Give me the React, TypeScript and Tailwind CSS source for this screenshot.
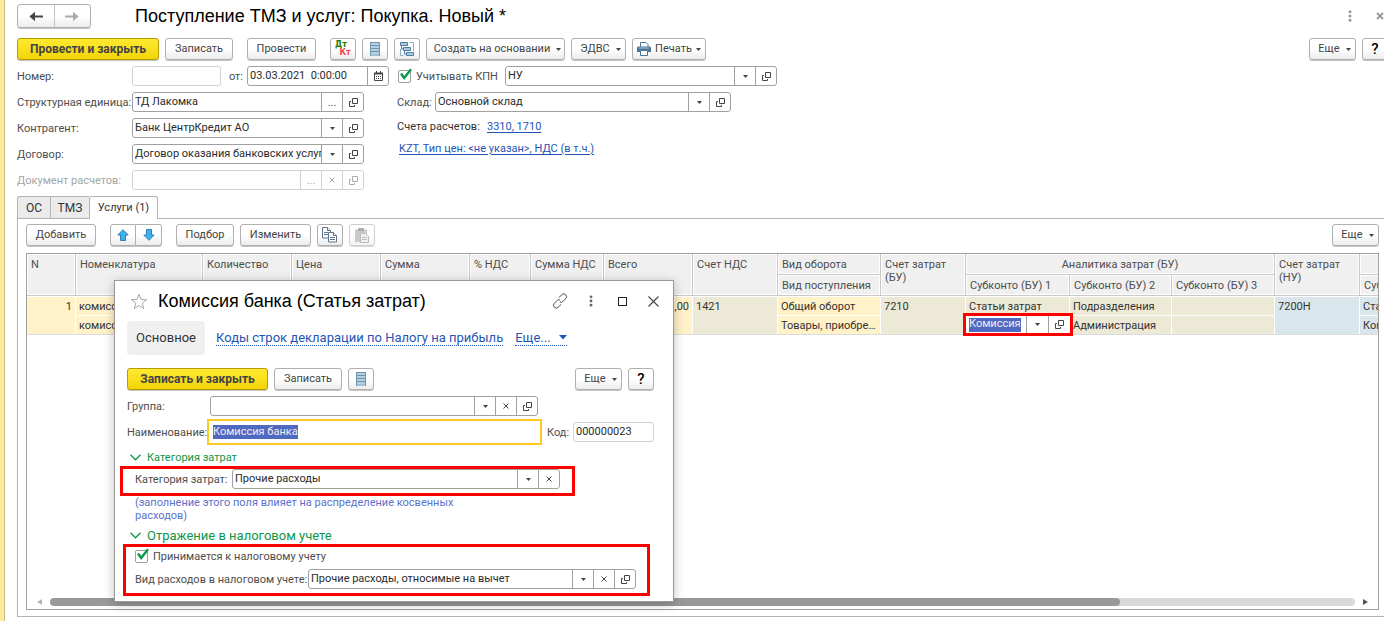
import React from "react";

type AddonKind = "down" | "open" | "clear" | "dots" | "calendar";

const cx = (...parts: (string | false | undefined)[]) => parts.filter(Boolean).join(" ");

function Caret({ className }: { className?: string }) {
  return (
    <svg width="5" height="3" viewBox="0 0 5 3" className={cx("shrink-0 fill-current", className)} aria-hidden="true">
      <path d="M0 0h5L2.500 3z" />
    </svg>
  );
}

function AddonIcon({ kind }: { kind: AddonKind }) {
  if (kind === "down") return <Caret />;
  if (kind === "dots") return <span className="leading-none">...</span>;
  if (kind === "clear")
    return (
      <svg width="6" height="6" viewBox="0 0 6 6" fill="none" stroke="currentColor" aria-hidden="true">
        <path d="M.5.5l5 5M5.500.5l-5 5" />
      </svg>
    );
  if (kind === "calendar")
    return (
      <svg width="9" height="10" viewBox="0 0 9 10" fill="none" stroke="currentColor" aria-hidden="true">
        <path d="M.5 2.500h8v7h-8z" />
        <path d="M0 2.500h9" strokeWidth="2" />
        <path d="M2.500 0v2M6.500 0v2" />
        <path d="M2 5.500h5M2 7.500h5" strokeDasharray="1 1" />
      </svg>
    );
  return (
    <svg width="9" height="9" viewBox="0 0 9 9" fill="none" stroke="currentColor" aria-hidden="true">
      <path d="M3.500.5h5v5h-5z" />
      <path d="M2 3.500H.5v5h5V7" />
    </svg>
  );
}

const addonNames: Record<AddonKind, string> = {
  down: "Выбрать из списка",
  open: "Открыть",
  clear: "Очистить",
  dots: "Выбрать",
  calendar: "Календарь",
};

interface FieldProps {
  id: string;
  value?: string;
  addons?: AddonKind[];
  className?: string;
  muted?: boolean;
  pale?: boolean;
  label?: string;
}

function Field({ id, value = "", addons = [], className, muted, pale, label }: FieldProps) {
  const line = muted || pale ? "border-[#d2d2d2]" : "border-[#a0a0a0]";
  return (
    <div className={cx("flex h-5 shrink-0 overflow-hidden rounded-[3px] border bg-white", line, className)}>
      <input
        id={id}
        aria-label={label}
        defaultValue={value}
        disabled={muted}
        className="min-w-0 flex-1 bg-transparent pt-px pl-0.5 text-[#2b2b2b] outline-none"
      />
      {addons.map((kind) => (
        <button
          key={kind}
          type="button"
          aria-label={addonNames[kind]}
          disabled={muted}
          className={cx("flex w-[21px] items-center justify-center border-l", line, muted ? "text-[#aaa]" : "text-[#444]")}
        >
          <AddonIcon kind={kind} />
        </button>
      ))}
    </div>
  );
}

interface BtnProps {
  children?: React.ReactNode;
  className?: string;
  primary?: boolean;
  name?: string;
  disabled?: boolean;
}

function Btn({ children, className, primary, name, disabled }: BtnProps) {
  return (
    <button
      type="button"
      aria-label={name}
      disabled={disabled}
      className={cx(
        "flex h-[22px] shrink-0 items-center justify-center whitespace-nowrap rounded-[3px] border shadow-[0_1px_0_#c4c4c4]",
        primary
          ? "border-[#b39b00] bg-linear-to-b from-[#ffe92e] to-[#f2d500] text-[12px] font-bold text-[#444]"
          : "border-[#b0b0b0] bg-linear-to-b from-white from-50% to-[#ececec] text-[11px] text-[#444]",
        disabled && "opacity-60",
        className,
      )}
    >
      {children}
    </button>
  );
}

function MoreBtn() {
  return (
    <Btn className="w-[47px] gap-1.5 pl-1">
      Еще <Caret />
    </Btn>
  );
}

function HelpBtn() {
  return (
    <Btn name="Справка" className="w-[26px]">
      <span className="text-[15px] font-medium text-black">?</span>
    </Btn>
  );
}

function ListIcon() {
  return (
    <svg width="10" height="14" viewBox="0 0 10 14" aria-hidden="true">
      <path d="M0 0h10v14H0z" fill="#6f95b0" />
      <path d="M1 2h8M1 5h8M1 8h8M1 11h8" stroke="#b4cfe2" strokeWidth="2" />
      <path d="M1 13h8" stroke="#dbe8f2" />
    </svg>
  );
}

function StructureIcon() {
  return (
    <svg width="15" height="15" viewBox="0 0 15 15" fill="none" aria-hidden="true">
      <path d="M.5.5h7v3h-7zM3.500 5.500h7v3h-7zM6.500 10.500h7v3h-7z" fill="#a9c9de" stroke="#4f7f9f" />
      <path d="M1.500 4v3h2M4.500 9v3h2" stroke="#4f7f9f" />
      <path d="M9.500.5h4v8.500M.5 7v6.500h3" stroke="#8fb0c6" />
    </svg>
  );
}

function PrinterIcon() {
  return (
    <svg width="14" height="14" viewBox="0 0 14 14" aria-hidden="true">
      <path d="M3.500 5V.5h5.500l2 2V5" fill="#fff" stroke="#4b7594" />
      <path d="M1 4.500h12l1 1V10h-3V8H3v2H0V5.500z" fill="#4b7594" />
      <path d="M3.500 8.500h7v5h-7z" fill="#fff" stroke="#4b7594" />
      <path d="M2 6h10" stroke="#a9c9de" />
    </svg>
  );
}

function MoveIcon({ down }: { down?: boolean }) {
  return (
    <svg width="12" height="12" viewBox="0 0 12 12" className={down ? "rotate-180" : ""} aria-hidden="true">
      <path d="M6 .7l5.200 5.300H8.500v5.500h-5V6H.8z" fill="#3fb0f0" stroke="#2277ad" strokeWidth=".9" />
    </svg>
  );
}

function CopyIcon() {
  return (
    <svg width="16" height="16" viewBox="0 0 16 16" fill="#fff" stroke="#60758b" aria-hidden="true">
      <path d="M.5.5h5l3 3v7.500h-8z" />
      <path d="M5.500.5v3h3M2 5.500h4M2 7.500h4" />
      <path d="M6.500 5.500h5l3 3V15h-8z" />
      <path d="M11.500 5.500v3h3M8 10.500h5M8 12.500h5" />
    </svg>
  );
}

function PasteIcon() {
  return (
    <svg width="15" height="15" viewBox="0 0 15 15" fill="none" aria-hidden="true">
      <path d="M0 1.500h12V14H0z" fill="#a8a8a8" />
      <path d="M3 0h6v3H3z" fill="#777" />
      <path d="M5.500 5.500h5l3 3v6h-8z" fill="#e4e7ea" stroke="#8a8f95" />
      <path d="M7 9.500h5M7 11.500h5" stroke="#8a8f95" />
    </svg>
  );
}

function Tick({ id, label }: { id: string; label: string }) {
  return (
    <div className="flex items-center gap-[5px]">
      <span className="relative flex size-[13px] shrink-0">
        <input id={id} type="checkbox" defaultChecked className="peer size-[13px] appearance-none rounded-[2px] border border-[#a0a0a0] bg-white" />
        <svg
          viewBox="0 0 14 13"
          className="pointer-events-none absolute -top-0.5 left-0.5 hidden h-[13px] w-3.5 peer-checked:block"
          fill="none"
          stroke="#0b9a4b"
          strokeWidth="2.400"
          aria-hidden="true"
        >
          <path d="M1 5.500l3.200 4.500L11 1.200" />
        </svg>
      </span>
      <label htmlFor={id} className="whitespace-nowrap pt-0.5">{label}</label>
    </div>
  );
}

function FormRow({ id, label, muted, children }: { id: string; label: string; muted?: boolean; children: React.ReactNode }) {
  return (
    <div className="flex h-5 items-center">
      <label htmlFor={id} className={cx("w-[115px] shrink-0 whitespace-nowrap pt-0.5", muted && "text-[#a5a5a5]")}>
        {label}
      </label>
      {children}
    </div>
  );
}

function DocumentForm() {
  return (
    <div className="mt-1.5 flex gap-2">
      <div className="flex w-[372px] shrink-0 flex-col gap-1.5">
        <FormRow id="number" label="Номер:">
          <Field id="number" pale className="w-[89px]" />
          <label htmlFor="date" className="ml-auto mr-1 pt-0.5">от:</label>
          <Field id="date" value="03.03.2021  0:00:00" addons={["calendar"]} className="w-[142px]" />
        </FormRow>
        <FormRow id="unit" label="Структурная единица:">
          <Field id="unit" value="ТД Лакомка" addons={["dots", "open"]} className="w-[232px]" />
        </FormRow>
        <FormRow id="partner" label="Контрагент:">
          <Field id="partner" value="Банк ЦентрКредит АО" addons={["down", "open"]} className="w-[232px]" />
        </FormRow>
        <FormRow id="contract" label="Договор:">
          <Field id="contract" value="Договор оказания банковских услуг" addons={["down", "open"]} className="w-[232px]" />
        </FormRow>
        <FormRow id="settlement" label="Документ расчетов:" muted>
          <Field id="settlement" muted addons={["dots", "clear", "open"]} className="w-[232px]" />
        </FormRow>
      </div>
      <div className="flex flex-col gap-1.5">
        <div className="flex h-5 items-center pl-px">
          <div className="w-[107px]">
            <Tick id="kpn" label="Учитывать КПН" />
          </div>
          <Field id="kpn-kind" label="Вид учета" value="НУ" addons={["down", "open"]} className="w-[272px]" />
        </div>
        <div className="flex h-5 items-center">
          <label htmlFor="stock" className="w-[38px] pt-0.5">Склад:</label>
          <Field id="stock" value="Основной склад" addons={["down", "open"]} className="w-[296px]" />
        </div>
        <div className="flex h-4 items-center pt-0.5">
          <span className="w-[90px] text-[#333]">Счета расчетов:</span>
          <a href="#accounts" className="text-[#1f55b5] underline underline-offset-2">3310, 1710</a>
        </div>
        <div className="flex h-4 items-center pt-0.5 pl-0.5">
          <a href="#prices" className="text-[#1f55b5] underline underline-offset-2">KZT, Тип цен: &lt;не указан&gt;, НДС (в т.ч.)</a>
        </div>
      </div>
    </div>
  );
}

const columnWidths = [49, 127, 89, 89, 89, 61, 73, 89, 85, 103, 85, 104, 102, 103, 85, 104];

const TH = "border-r border-b border-[#c9c9c9] bg-[#f0f0f0] px-1 align-top font-normal leading-[13px] text-[#4d4d4d] shadow-[inset_0_0_0_1px_#fff]";
const TD = "h-[19px] border-t border-r border-white px-[3px] pt-0.5 align-top leading-4 overflow-hidden whitespace-nowrap text-ellipsis";
const YELLOW = "bg-[#fff1c8]";
const OLIVE = "bg-[#ecead7]";
const BLUE = "bg-[#d9e7ed]";

function ServicesTable() {
  return (
    <table className="w-[1437px] table-fixed border-separate border-spacing-0 border-b border-[#dcdcdc]">
      <colgroup>
        {columnWidths.map((width, i) => (
          <col key={i} style={{ width }} />
        ))}
      </colgroup>
      <thead>
        <tr className="h-[21px]">
          {["N", "Номенклатура", "Количество", "Цена", "Сумма", "% НДС", "Сумма НДС", "Всего", "Счет НДС"].map((name) => (
            <th key={name} rowSpan={2} className={cx(TH, "whitespace-nowrap pt-1 text-left")}>{name}</th>
          ))}
          <th className={cx(TH, "whitespace-nowrap pt-1 text-left")}>Вид оборота</th>
          <th rowSpan={2} className={cx(TH, "pt-1 text-left")}>Счет затрат (БУ)</th>
          <th colSpan={3} className={cx(TH, "pt-1 text-center")}>Аналитика затрат (БУ)</th>
          <th rowSpan={2} className={cx(TH, "pt-1 text-left")}>Счет затрат (НУ)</th>
          <th className={TH} />
        </tr>
        <tr className="h-[21px]">
          {["Вид поступления", "Субконто (БУ) 1", "Субконто (БУ) 2", "Субконто (БУ) 3", "Субконто (НУ) 1"].map((name) => (
            <th key={name} className={cx(TH, "whitespace-nowrap pt-1 text-left")}>{name}</th>
          ))}
        </tr>
      </thead>
      <tbody className="text-[#333]">
        <tr>
          <td rowSpan={2} className={cx(TD, YELLOW, "text-right")}>1</td>
          <td className={cx(TD, YELLOW)}>комиссия</td>
          {[0, 1, 2, 3, 4].map((n) => (
            <td key={n} rowSpan={2} className={cx(TD, YELLOW)} />
          ))}
          <td rowSpan={2} className={cx(TD, YELLOW, "text-right")}>,00</td>
          <td rowSpan={2} className={cx(TD, OLIVE)}>1421</td>
          <td className={cx(TD, YELLOW)}>Общий оборот</td>
          <td rowSpan={2} className={cx(TD, OLIVE)}>7210</td>
          <td className={cx(TD, OLIVE)}>Статьи затрат</td>
          <td className={cx(TD, OLIVE)}>Подразделения</td>
          <td className={cx(TD, OLIVE)} />
          <td rowSpan={2} className={cx(TD, BLUE)}>7200Н</td>
          <td className={cx(TD, BLUE)}>Статьи затрат</td>
        </tr>
        <tr>
          <td className={cx(TD, YELLOW)}>комиссия</td>
          <td className={cx(TD, YELLOW)}>Товары, приобре...</td>
          <td className="relative h-[19px] bg-white p-0">
            <div className="flex h-[18px] items-center pl-[3px]">
              <div className="flex min-w-0 flex-1">
                <input
                  aria-label="Субконто (БУ) 1"
                  defaultValue="Комиссия"
                  className="field-sizing-content h-3.5 bg-[#5069c0] text-[#f3ecf5] outline-none"
                />
              </div>
              <button type="button" aria-label="Выбрать из списка" className="flex h-[18px] w-[22px] items-center justify-center border-l border-[#a0a0a0] text-[#444]">
                <Caret />
              </button>
              <button type="button" aria-label="Открыть" className="flex h-[18px] w-[22px] items-center justify-center border-l border-[#a0a0a0] text-[#444]">
                <AddonIcon kind="open" />
              </button>
            </div>
            <div className="pointer-events-none absolute -inset-x-[3px] -inset-y-0.5 border-3 border-[#fe0000]" />
          </td>
          <td className={cx(TD, OLIVE)}>Администрация</td>
          <td className={cx(TD, OLIVE)} />
          <td className={cx(TD, BLUE)}>Комиссия</td>
        </tr>
      </tbody>
    </table>
  );
}

function Section({ children, large }: { children: React.ReactNode; large?: boolean }) {
  return (
    <button type="button" className={cx("flex h-4 items-center gap-1.5 self-start pl-[3px] text-[#0d9648]", large && "text-[13px]")}>
      <svg width="11" height="7" viewBox="0 0 11 7" fill="none" stroke="currentColor" strokeWidth="1.300" aria-hidden="true">
        <path d="M.5.8l5 5 5-5" />
      </svg>
      <span className="pt-0.5">{children}</span>
    </button>
  );
}

function CostItemDialog() {
  return (
    <section
      role="dialog"
      aria-labelledby="dialog-title"
      className="absolute top-[280px] left-[114px] flex w-[560px] flex-col border border-[#999] bg-white px-3 pb-[5px] shadow-[0_2px_10px_rgba(0,0,0,0.25)]"
    >
      <header className="flex h-10 items-center">
        <svg width="18" height="17" viewBox="0 0 18 17" fill="none" stroke="#a8a8a8" className="ml-[3px]" aria-hidden="true">
          <path d="M9 1.300l2 5.200 5.700.2-4.500 3.500 1.600 5.400L9 12.500l-4.800 3.100 1.600-5.400L1.300 6.700 7 6.500z" />
        </svg>
        <h2 id="dialog-title" className="ml-2.5 flex-1 whitespace-nowrap font-['Liberation_Sans',sans-serif] text-[18px] text-black">
          Комиссия банка (Статья затрат)
        </h2>
        <div className="flex items-center gap-[15px] text-[#444]">
          <button type="button" aria-label="Ссылка" className="flex size-4 items-center justify-center">
            <svg width="16" height="16" viewBox="0 0 16 16" fill="none" stroke="currentColor" aria-hidden="true">
              <path d="M7 4.500L9.700 1.800a2.600 2.600 0 0 1 3.900 0 2.600 2.600 0 0 1 .2 3.700l-3 3.100a2.500 2.500 0 0 1-3 .4" />
              <path d="M9 11.500l-2.700 2.700a2.600 2.600 0 0 1-3.900 0 2.600 2.600 0 0 1-.2-3.700l3-3.100a2.500 2.500 0 0 1 3-.4" />
            </svg>
          </button>
          <button type="button" aria-label="Меню" className="flex size-4 items-center justify-center">
            <svg width="4" height="12" viewBox="0 0 4 12" fill="#666" aria-hidden="true">
              <circle cx="2" cy="1.800" r="1.400" /><circle cx="2" cy="6" r="1.400" /><circle cx="2" cy="10.200" r="1.400" />
            </svg>
          </button>
          <button type="button" aria-label="Развернуть" className="flex size-4 items-center justify-center">
            <span className="size-[9px] border border-[#222]" />
          </button>
          <button type="button" aria-label="Закрыть" className="flex size-4 items-center justify-center">
            <svg width="11" height="11" viewBox="0 0 11 11" fill="none" stroke="currentColor" strokeWidth="1.100" aria-hidden="true">
              <path d="M.5.5l10 10M10.500.5l-10 10" />
            </svg>
          </button>
        </div>
      </header>

      <nav className="flex h-[34px] items-center text-[13px]">
        <a href="#main" className="flex h-full w-[78px] items-center justify-center rounded-[3px] bg-[#f0f0f0] text-[#333]">Основное</a>
        <a href="#codes" className="ml-[11px] whitespace-nowrap border-b border-dotted border-[#1f55b5] leading-[15px] text-[#1f55b5]">
          Коды строк декларации по Налогу на прибыль
        </a>
        <a href="#more" className="ml-3 flex items-center gap-2 border-b border-dotted border-[#1f55b5] leading-[15px] text-[#1f55b5]">
          Еще...
          <svg width="8" height="5" viewBox="0 0 8 5" fill="currentColor" aria-hidden="true"><path d="M0 0h8L4 4.500z" /></svg>
        </a>
      </nav>

      <div className="mt-[13px] flex gap-1.5">
        <Btn primary className="w-[141px]">Записать и закрыть</Btn>
        <Btn className="w-[68px]">Записать</Btn>
        <Btn name="Список" className="w-[26px]"><ListIcon /></Btn>
        <div className="ml-auto mr-[7px] flex gap-1.5">
          <MoreBtn />
          <HelpBtn />
        </div>
      </div>

      <div className="mt-1.5 flex items-center">
        <label htmlFor="group" className="w-[83px] pt-0.5">Группа:</label>
        <Field id="group" addons={["down", "clear", "open"]} className="w-[328px]" />
      </div>
      <div className="mt-[3px] flex items-center">
        <label htmlFor="name" className="w-20 whitespace-nowrap pt-0.5">Наименование:</label>
        <div className="flex h-[26px] w-[335px] items-center border-2 border-[#fbc91f] pl-1">
          <input id="name" defaultValue="Комиссия банка" className="field-sizing-content h-3.5 bg-[#5069c0] text-[#f3ecf5] outline-none" />
        </div>
        <label htmlFor="code" className="ml-[5px] w-[26px] pt-0.5">Код:</label>
        <Field id="code" value="000000023" pale className="w-[81px]" />
      </div>

      <div className="mt-1 flex flex-col">
        <Section>Категория затрат</Section>
      </div>
      <div className="-ml-[7px] mt-px flex h-[30px] w-[455px] items-start border-3 border-[#fe0000] pl-3">
        <label htmlFor="category" className="w-[97px] whitespace-nowrap pt-px leading-5">Категория затрат:</label>
        <Field id="category" value="Прочие расходы" addons={["down", "clear"]} className="w-[328px]" />
      </div>
      <p className="w-[340px] pl-2 leading-[13px] text-[#5b72cb]">
        (заполнение этого поля влияет на распределение косвенных расходов)
      </p>

      <div className="mt-[5px] flex flex-col">
        <Section large>Отражение в налоговом учете</Section>
      </div>
      <div className="-ml-1 mt-px flex h-[52px] w-[527px] flex-col gap-[5px] border-3 border-[#fe0000] pt-0.5 pl-[9px]">
        <div className="flex h-[15px] items-center">
          <Tick id="tax" label="Принимается к налоговому учету" />
        </div>
        <div className="flex items-center">
          <label htmlFor="tax-kind" className="w-[173px] whitespace-nowrap pt-0.5">Вид расходов в налоговом учете:</label>
          <Field id="tax-kind" value="Прочие расходы, относимые на вычет" addons={["down", "clear", "open"]} className="w-[328px]" />
        </div>
      </div>
    </section>
  );
}

function NavArrow({ forward }: { forward?: boolean }) {
  return (
    <svg width="14" height="11" viewBox="0 0 14 11" className={forward ? "rotate-180" : ""} fill="none" stroke="currentColor" strokeWidth="2" aria-hidden="true">
      <path d="M1.500 5.500H14" />
      <path d="M6 .8v9.400L.5 5.500z" fill="currentColor" stroke="none" />
    </svg>
  );
}

export default function App() {
  return (
    <div className="relative flex min-h-screen overflow-hidden bg-white font-[Roboto,sans-serif] text-[11px] text-[#4d4d4d]">
      <div className="w-[5px] shrink-0 border-r border-[#c9bd7c] bg-[#fbeb9c]" />
      <main className="flex min-w-0 flex-1 flex-col pl-3 pt-1 pb-1">
        <header className="flex h-6 items-center">
          <div className="flex h-6 w-[74px] rounded-[3px] border border-[#b0b0b0] bg-linear-to-b from-white from-50% to-[#ececec] shadow-[0_1px_0_#c4c4c4]">
            <button type="button" aria-label="Назад" className="flex flex-1 items-center justify-center border-r border-[#c4c4c4] text-[#444]"><NavArrow /></button>
            <button type="button" aria-label="Вперед" className="flex flex-1 items-center justify-center text-[#aaa]"><NavArrow forward /></button>
          </div>
          <h1 className="ml-11 flex-1 whitespace-nowrap font-['Liberation_Sans',sans-serif] text-[18px] text-black">
            Поступление ТМЗ и услуг: Покупка. Новый *
          </h1>
          <button type="button" aria-label="Меню" className="mr-6 text-[#999]">
            <svg width="4" height="12" viewBox="0 0 4 12" fill="currentColor" aria-hidden="true">
              <circle cx="2" cy="1.800" r="1.500" /><circle cx="2" cy="6" r="1.500" /><circle cx="2" cy="10.200" r="1.500" />
            </svg>
          </button>
          <button type="button" aria-label="Закрыть" className="text-[#999]">
            <svg width="8" height="8" viewBox="0 0 8 8" fill="none" stroke="currentColor" strokeWidth="1.800" aria-hidden="true">
              <path d="M1 1l6 6M7 1L1 7" />
            </svg>
          </button>
        </header>

        <div className="mt-2.5 flex gap-1.5">
          <Btn primary className="w-[142px]">Провести и закрыть</Btn>
          <Btn className="w-[68px]">Записать</Btn>
          <Btn className="ml-2 w-[69px]">Провести</Btn>
          <Btn name="Движения документа" className="ml-2 w-[26px]">
            <span className="flex flex-col font-['DejaVu_Sans',sans-serif] text-[8px] font-bold leading-2">
              <span className="pr-1 text-[#1e7d00]">Дт</span>
              <span className="pl-1 text-[#f84545]">Кт</span>
            </span>
          </Btn>
          <Btn name="Список" className="w-[26px]"><ListIcon /></Btn>
          <Btn name="Структура подчиненности" className="w-[26px]"><StructureIcon /></Btn>
          <Btn className="w-[139px] gap-1.5 pl-1">Создать на основании <Caret /></Btn>
          <Btn className="w-[55px] gap-1.5 pl-1">ЭДВС <Caret /></Btn>
          <Btn className="w-[74px] gap-1"><PrinterIcon />Печать <Caret /></Btn>
          <div className="-mr-1 ml-auto flex gap-1.5">
            <MoreBtn />
            <HelpBtn />
          </div>
        </div>

        <DocumentForm />

        <div role="tablist" className="mt-1.5 flex h-[22px] text-[#333]">
          <button type="button" role="tab" className="w-[33px] rounded-tl-[3px] border border-r-0 border-b-0 border-[#b4b4b4] bg-[#ebebeb] text-[12px]">ОС</button>
          <button type="button" role="tab" className="w-[39px] border border-r-0 border-b-0 border-[#b4b4b4] bg-[#ebebeb] text-[12px]">ТМЗ</button>
          <button type="button" role="tab" aria-selected="true" className="z-10 -mb-px w-[69px] rounded-t-[3px] border border-b-0 border-[#b4b4b4] bg-white">
            Услуги (1)
          </button>
        </div>
        <div className="flex min-h-0 flex-1 flex-col border border-r-0 border-[#b4b4b4] pt-[5px] pr-[5px] pb-1.5 pl-2">
          <div className="flex gap-1.5">
            <Btn className="w-[70px]">Добавить</Btn>
            <div className="ml-2 flex">
              <Btn name="Вверх" className="w-[26px] rounded-r-none"><MoveIcon /></Btn>
              <Btn name="Вниз" className="w-[26px] rounded-l-none border-l-0"><MoveIcon down /></Btn>
            </div>
            <Btn className="ml-2 w-[58px]">Подбор</Btn>
            <Btn className="w-[71px]">Изменить</Btn>
            <Btn name="Копировать" className="w-[26px]"><CopyIcon /></Btn>
            <Btn name="Вставить" disabled className="w-[26px]"><PasteIcon /></Btn>
            <div className="ml-auto"><MoreBtn /></div>
          </div>
          <div className="mt-[7px] flex flex-1 flex-col justify-between overflow-hidden border border-[#a0a0a0]">
            <ServicesTable />
            <div className="mb-[3px] flex h-2 items-center px-2.5">
              <svg width="5" height="6" viewBox="0 0 5 6" fill="#b5b5b5" aria-hidden="true"><path d="M5 0v6L0 3z" /></svg>
              <div className="mx-2 h-2 flex-1 overflow-hidden rounded-full bg-[#d9d9d9]">
                <div className="h-2 w-[82%] rounded-full bg-[#999]" />
              </div>
              <svg width="5" height="6" viewBox="0 0 5 6" fill="#555" aria-hidden="true"><path d="M0 0v6l5-3z" /></svg>
            </div>
          </div>
        </div>
      </main>
      <CostItemDialog />
    </div>
  );
}
